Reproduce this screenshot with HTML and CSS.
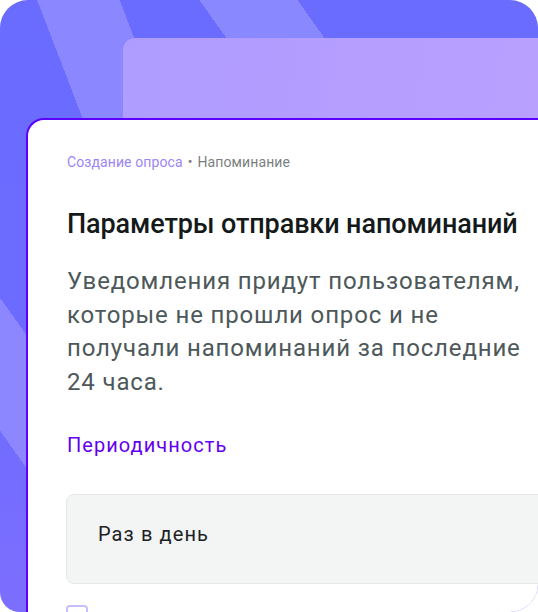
FILE: index.html
```html
<!DOCTYPE html>
<html lang="ru">
<head>
    <meta charset="UTF-8">
    <title>Напоминание</title>
    <link rel="stylesheet" href="styles.css">
</head>
<body>
    <div class="frame">
        <div class="back-sheet"></div>
        <div class="card">
            <div class="crumbs">
                <span class="crumb-link">Создание опроса</span>
                <span class="crumb-dot">•</span>
                <span class="crumb-current">Напоминание</span>
            </div>
            <h1 class="title">Параметры отправки напоминаний</h1>
            <p class="lead">Уведомления придут пользователям, которые не прошли опрос и не получали напоминаний за последние 24 часа.</p>
            <div class="field-label">Периодичность</div>
            <div class="select">Раз в день</div>
            <div class="next-row">
                <span class="check"></span>
            </div>
        </div>
    </div>
</body>
</html>
```

FILE: styles.css
```css
body {
    margin: 0;
    background: #fff;
    font-family: Roboto, 'Noto Sans', sans-serif;
}

.frame {
    width: 538px;
    height: 612px;
    border-radius: 28px 28px 28px 20px;
    overflow: hidden;
    padding-top: 38px;
    box-sizing: border-box;
    background:
        linear-gradient(69deg, transparent 254px, #8a87ff 254px, #8a87ff 331px, transparent 331px),
        linear-gradient(54.6deg, transparent 105px, #8c86ff 105px, #8c86ff 182px, transparent 182px, transparent 517px, #8a88ff 517px, #8a88ff 597px, transparent 597px),
        linear-gradient(180deg, #6a6cff 0%, #6c6bff 55%, #7c6eff 100%);
}

.back-sheet {
    margin-left: 123px;
    height: 80px;
    border-top-left-radius: 12px;
    background: linear-gradient(100deg, #ae9cff 0%, #b59eff 60%, #b9a0ff 100%);
}

.card {
    margin-left: 26px;
    width: 560px;
    height: 520px;
    background: #fff;
    border-top: 2px solid #5c00ff;
    border-left: 2px solid #5c00ff;
    border-top-left-radius: 18px;
    padding: 34px 0 0 39px;
    box-sizing: border-box;
}

.crumbs {
    font-size: 14px;
    line-height: 16px;
    letter-spacing: 0.1px;
    display: flex;
    gap: 5px;
}

.crumb-link {
    color: #9a86f6;
}

.crumb-dot {
    color: #7d8283;
}

.crumb-current {
    color: #7a7f80;
}

.title {
    margin: 38px 0 0;
    font-size: 27px;
    line-height: 32px;
    font-weight: 500;
    color: #14191a;
    letter-spacing: -0.1px;
}

.lead {
    margin: 25px 0 0;
    width: 470px;
    font-size: 24px;
    line-height: 33.5px;
    letter-spacing: 0.85px;
    color: #4d585a;
}

.field-label {
    margin-top: 34px;
    font-size: 20px;
    line-height: 24px;
    letter-spacing: 1.05px;
    color: #6400f0;
}

.select {
    margin-top: 37px;
    margin-left: -1px;
    height: 90px;
    display: flex;
    align-items: center;
    padding: 0 0 10px 31px;
    box-sizing: border-box;
    background: #f3f4f4;
    border: 1px solid #e5e7e7;
    border-radius: 8px;
    font-size: 20px;
    letter-spacing: 1.1px;
    color: #1c2224;
}

.next-row {
    margin-top: 21px;
    margin-left: -1px;
}

.check {
    display: block;
    width: 22px;
    height: 22px;
    border: 2px solid #c9bdfc;
    border-radius: 4px;
    box-sizing: border-box;
}
```
